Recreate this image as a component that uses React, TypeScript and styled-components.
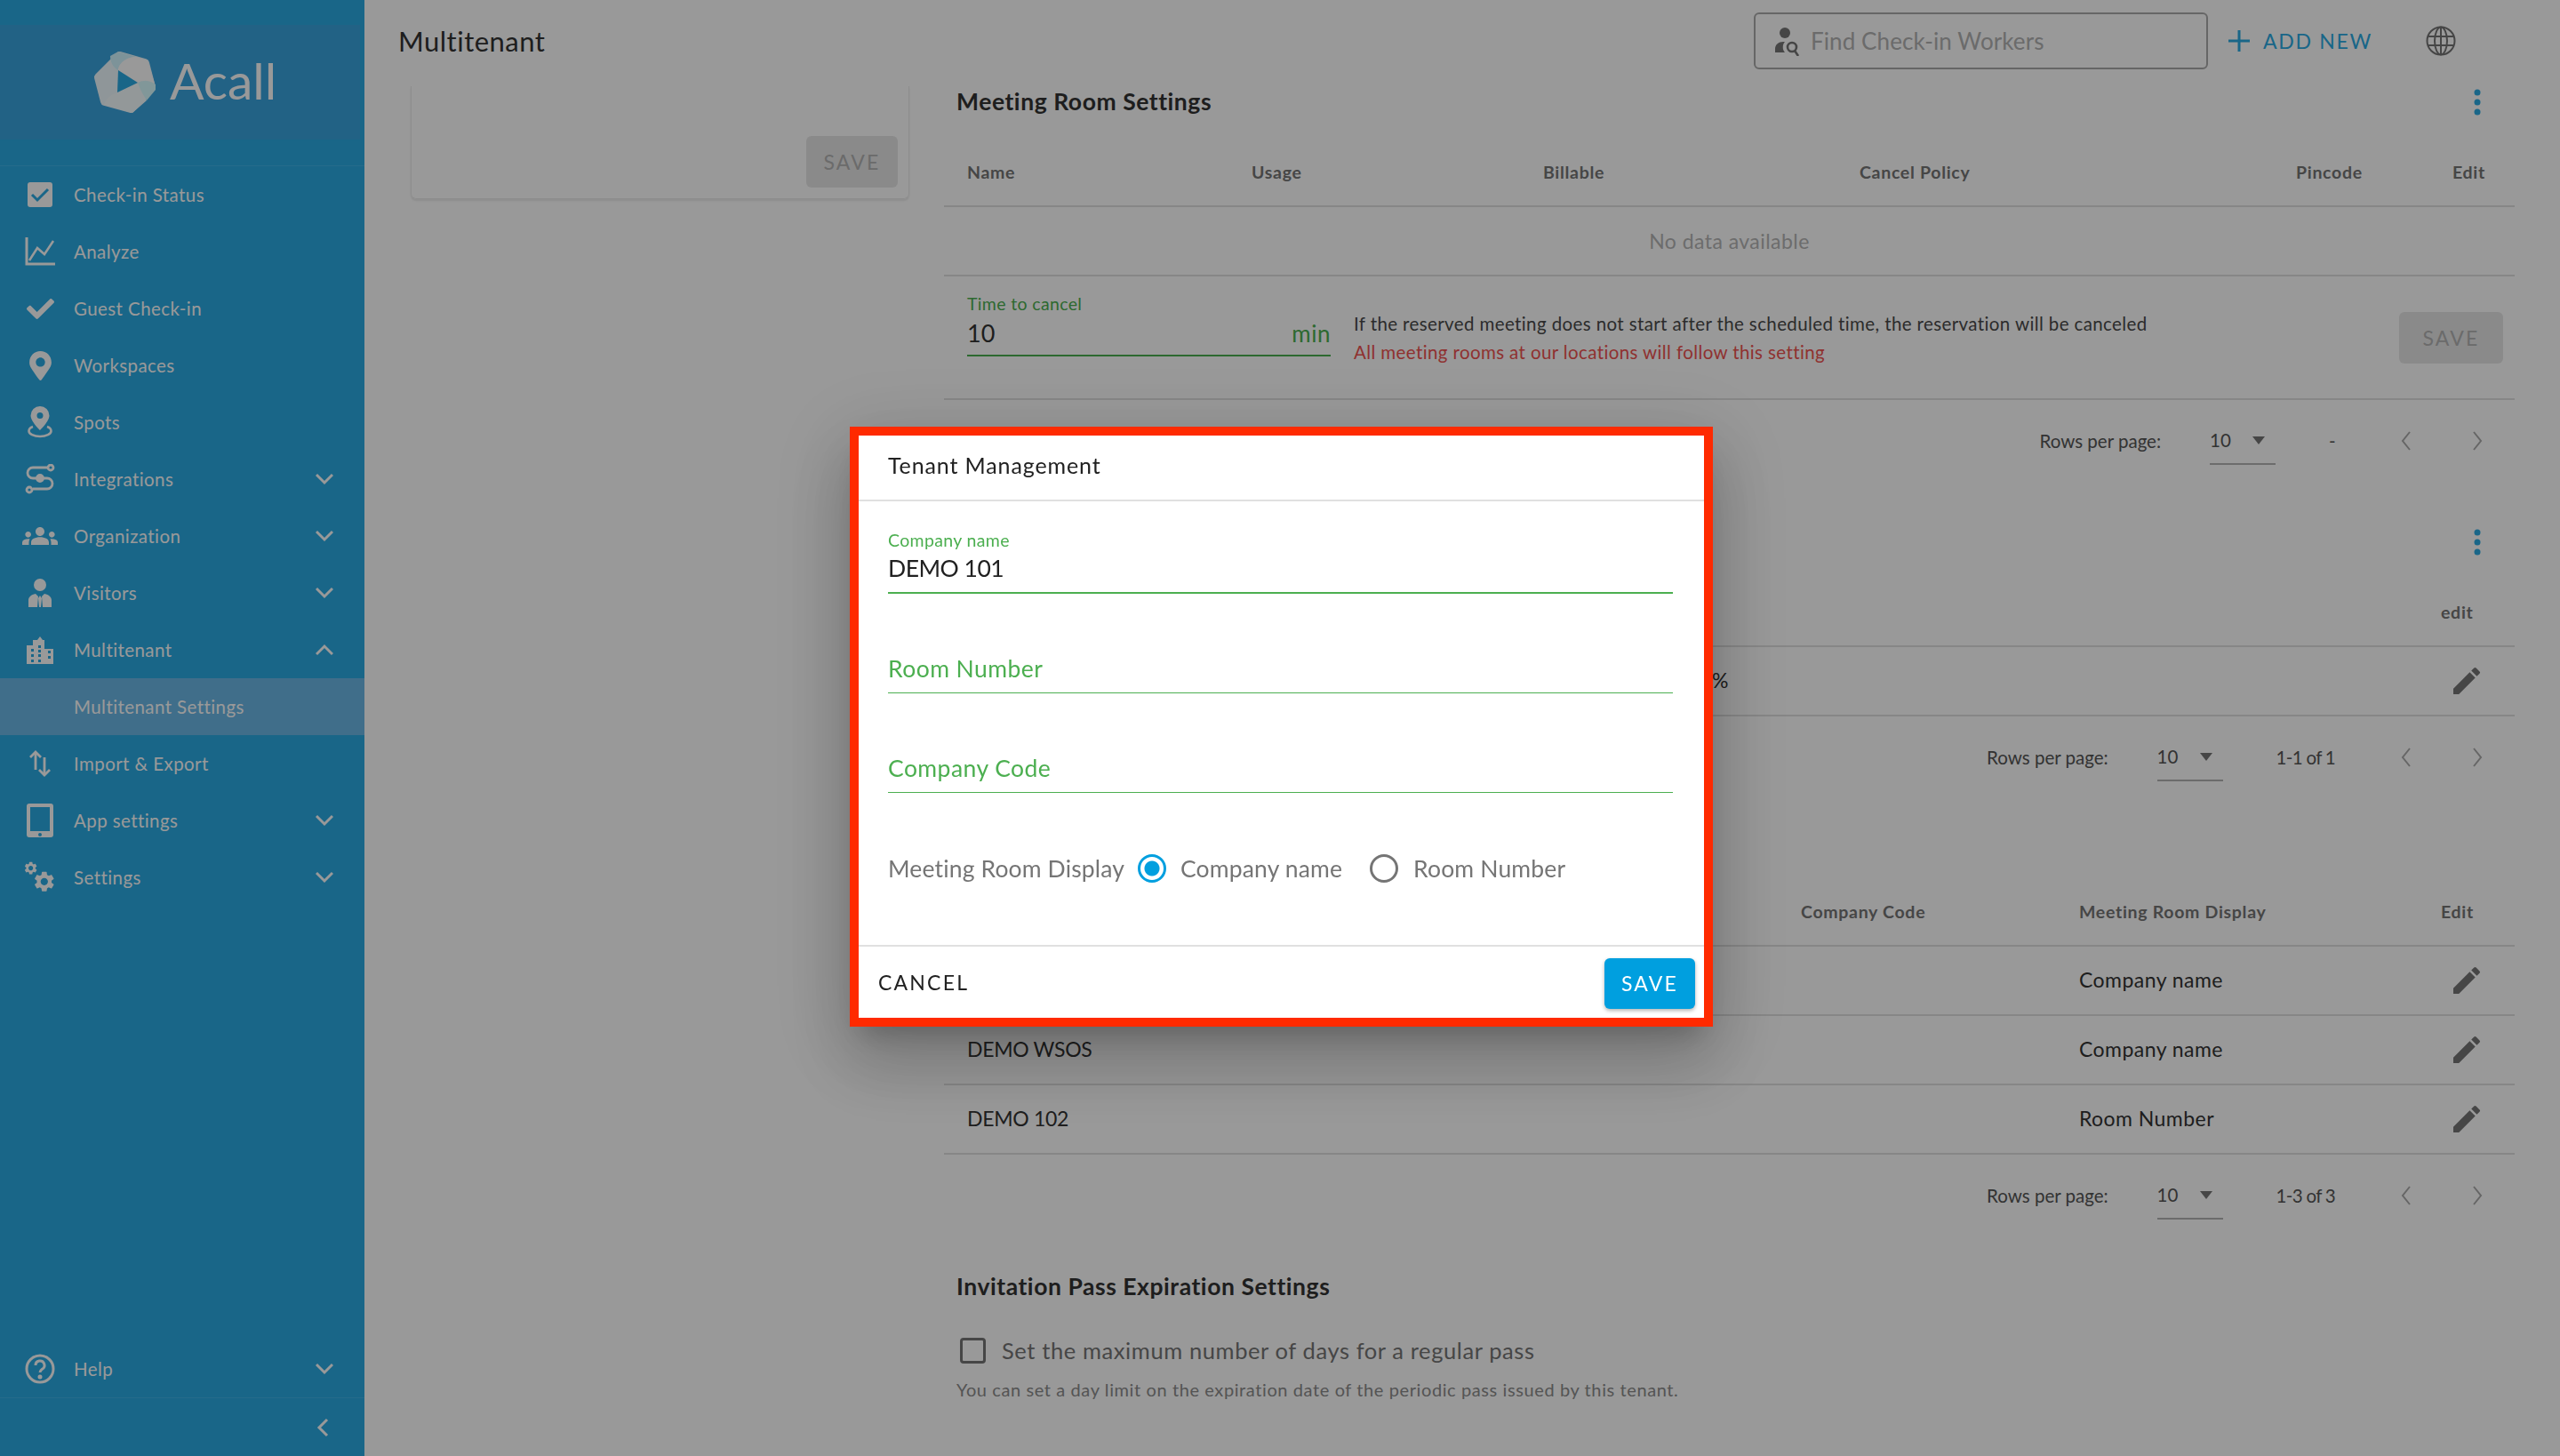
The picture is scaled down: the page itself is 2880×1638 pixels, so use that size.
import React from 'react'
import styled, { createGlobalStyle } from 'styled-components'
import { MdGroups, MdEdit } from 'react-icons/md'
import { FaCheck, FaMapMarkerAlt } from 'react-icons/fa'

const GEAR =
  'M19.14 12.94c.04-.3.06-.61.06-.94 0-.32-.02-.64-.07-.94l2.03-1.58c.18-.14.23-.41.12-.61l-1.92-3.32c-.12-.22-.37-.29-.59-.22l-2.39.96c-.5-.38-1.03-.7-1.62-.94l-.36-2.54c-.04-.24-.24-.41-.48-.41h-3.84c-.24 0-.43.17-.47.41l-.36 2.54c-.59.24-1.13.57-1.62.94l-2.39-.96c-.22-.08-.47 0-.59.22L2.74 8.87c-.12.21-.08.47.12.61l2.03 1.58c-.05.3-.09.63-.09.94s.02.64.07.94l-2.03 1.58c-.18.14-.23.41-.12.61l1.92 3.32c.12.22.37.29.59.22l2.39-.96c.5.38 1.03.7 1.62.94l.36 2.54c.05.24.24.41.48.41h3.84c.24 0 .44-.17.47-.41l.36-2.54c.59-.24 1.13-.56 1.62-.94l2.39.96c.22.08.47 0 .59-.22l1.92-3.32c.12-.22.07-.47-.12-.61l-2.01-1.58zM12 15.6c-1.98 0-3.6-1.62-3.6-3.6s1.62-3.6 3.6-3.6 3.6 1.62 3.6 3.6-1.62 3.6-3.6 3.6z'

const GlobalStyle = createGlobalStyle`
  html, body {
    margin: 0;
    padding: 0;
    height: 100%;
    background: #fff;
    font-family: Lato, "Open Sans", sans-serif;
    color: #333;
  }
  * { box-sizing: border-box; }
`

const Shell = styled.div`
  display: flex;
  width: 2880px;
  height: 1638px;
  overflow: hidden;
`

const Sidebar = styled.aside`
  width: 410px;
  flex: none;
  display: flex;
  flex-direction: column;
  background: #2baae3;
  color: #fff;
`

const LogoBlock = styled.div`
  height: 187px;
  padding: 28px 5px 29px 0;
  border-bottom: 1px solid #3fb4e8;
`

const LogoBand = styled.div`
  height: 129px;
  display: flex;
  align-items: center;
  padding-left: 105px;
  background: #39a3de;
`

const LogoText = styled.span`
  margin: 0 0 5px 15px;
  font-size: 57px;
  font-weight: 400;
  letter-spacing: 0;
  line-height: 1;
`

const Nav = styled.nav`
  flex: 1;
`

const NavRow = styled.div<{ $active?: boolean }>`
  height: 64px;
  display: flex;
  align-items: center;
  background: ${(p) => (p.$active ? '#6bb7e6' : 'transparent')};
`

const NavIcon = styled.span`
  width: 90px;
  flex: none;
  margin-right: -7px;
  display: flex;
  justify-content: center;
  svg { display: block; }
`

const NavLabel = styled.span`
  flex: 1;
  font-size: 20.5px;
  letter-spacing: 0.42px;
`

const NavChevron = styled.svg`
  width: 20px;
  height: 14px;
  margin-right: 35px;
  fill: none;
  stroke: #fff;
  stroke-width: 3;
`

const SidebarFoot = styled.div`
  border-top: 1px solid #3fb4e8;
  height: 66px;
  display: flex;
  align-items: center;
  justify-content: flex-end;
  padding-right: 40px;
`

const Main = styled.main`
  flex: 1;
  min-width: 0;
  display: flex;
  flex-direction: column;
`

const TopBar = styled.header`
  height: 92px;
  flex: none;
  display: flex;
  align-items: center;
  padding-left: 38px;
`

const PageTitle = styled.h1`
  flex: 1;
  margin: 0;
  font-size: 31px;
  font-weight: 400;
  letter-spacing: 0.5px;
  color: #333;
`

const SearchBox = styled.div`
  width: 511px;
  height: 64px;
  display: flex;
  align-items: center;
  padding-left: 20px;
  border: 2px solid #aaa;
  border-radius: 6px;
`

const SearchPlaceholder = styled.span`
  margin-left: 8px;
  font-size: 26px;
  letter-spacing: 0.1px;
  color: #b2b2b2;
`

const AddNew = styled.div`
  display: flex;
  align-items: center;
  margin-left: 22px;
  color: #2baae3;
  font-size: 23px;
  letter-spacing: 1.7px;
`

const AddIcon = styled.svg`
  width: 26px;
  height: 26px;
  margin-right: 14px;
  stroke: #2baae3;
  stroke-width: 3;
`

const GlobeIcon = styled.svg`
  width: 34px;
  height: 34px;
  margin: 0 117px 0 60px;
  fill: none;
  stroke: #757575;
  stroke-width: 2;
`

const Content = styled.div`
  flex: 1;
  display: flex;
  padding: 0 51px 0 52px;
  gap: 39px;
`

const LeftColumn = styled.div`
  width: 561px;
  flex: none;
`

const Card = styled.div`
  height: 127px;
  margin-top: 5px;
  padding: 56px 12px 0 0;
  display: flex;
  justify-content: flex-end;
  border: 1px solid #ececec;
  border-top: none;
  border-radius: 0 0 6px 6px;
  box-shadow: 0 2px 2px rgba(0, 0, 0, 0.08);
`

const RightColumn = styled.div`
  flex: 1;
  min-width: 0;
`

const SectionHead = styled.div<{ $gap?: number }>`
  height: 46px;
  margin-top: ${(p) => p.$gap ?? 0}px;
  padding: 0 36px 0 14px;
  display: flex;
  align-items: center;
  justify-content: space-between;
`

const SectionTitle = styled.h2`
  margin: 0 0 2px;
  font-size: 26.5px;
  font-weight: 700;
  letter-spacing: 0.55px;
  color: #333;
`

const Kebab = styled.svg`
  width: 12px;
  height: 32px;
  fill: #2baae3;
`

const TableRow = styled.div<{ $cols: string; $head?: boolean }>`
  display: grid;
  grid-template-columns: ${(p) => p.$cols};
  align-items: center;
  height: 78px;
  margin-top: ${(p) => (p.$head ? 17 : 0)}px;
  padding: 0 0 ${(p) => (p.$head ? 0 : 2)}px 26px;
  border-bottom: 2px solid #e0e0e0;
  font-size: ${(p) => (p.$head ? 19.5 : 23)}px;
  font-weight: ${(p) => (p.$head ? 700 : 400)};
  letter-spacing: ${(p) => (p.$head ? 0.7 : 0.45)}px;
  color: ${(p) => (p.$head ? '#757575' : '#333')};
`

const NameCell = styled.span`
  letter-spacing: -0.3px;
`

const EmptyRow = styled.div`
  height: 78px;
  display: flex;
  align-items: center;
  justify-content: center;
  border-bottom: 2px solid #e0e0e0;
  font-size: 23px;
  letter-spacing: 0.45px;
  color: #b5b5b5;
`

const EditButton = styled.span`
  display: block;
  padding: 2px 0 0 9px;
  color: #757575;
  svg { display: block; }
`

const TimeRow = styled.div`
  height: 139px;
  display: flex;
  align-items: flex-start;
  padding: 0 13px 0 26px;
  border-bottom: 2px solid #e0e0e0;
`

const TimeField = styled.div`
  width: 409px;
  flex: none;
  padding-top: 19px;
`

const SmallLabel = styled.div`
  height: 24px;
  font-size: 19.5px;
  line-height: 24px;
  letter-spacing: 0.35px;
  color: #4caf50;
`

const TimeInput = styled.div`
  height: 47px;
  display: flex;
  align-items: center;
  justify-content: space-between;
  padding-bottom: 4px;
  border-bottom: 2px solid #4caf50;
  font-size: 27px;
  color: #333;
`

const TimeUnit = styled.span`
  font-size: 26px;
  letter-spacing: 0.5px;
  color: #4caf50;
`

const TimeNote = styled.div`
  margin: 37px 0 0 26px;
  font-size: 20.5px;
  line-height: 32px;
  letter-spacing: 0.39px;
  color: #4a4a4a;
`

const TimeWarn = styled.div`
  color: #ef5350;
`

const DisabledSave = styled.button<{ $w: number }>`
  width: ${(p) => p.$w}px;
  height: 58px;
  flex: none;
  padding: 0;
  border: none;
  border-radius: 6px;
  background: #e6e6e6;
  color: #b2b2b2;
  font-family: inherit;
  font-size: 23px;
  letter-spacing: 2.2px;
`

const TimeSave = styled(DisabledSave)`
  margin: 40px 0 0 auto;
`

const Pagination = styled.div`
  height: 92px;
  display: flex;
  align-items: center;
  justify-content: flex-end;
  padding-right: 2px;
  font-size: 20.5px;
  letter-spacing: 0;
  color: #555;
`

const RowsSelect = styled.div`
  width: 74px;
  height: 54px;
  margin: 0 60px 0 55px;
  display: flex;
  align-items: center;
  justify-content: space-between;
  padding: 0 12px 0 0;
  border-bottom: 2px solid #b5b5b5;
`

const RangeText = styled.span`
  letter-spacing: -0.7px;
`

const Caret = styled.i`
  width: 0;
  height: 0;
  border-left: 7px solid transparent;
  border-right: 7px solid transparent;
  border-top: 9px solid #757575;
`

const PageButton = styled.span`
  width: 80px;
  display: flex;
  justify-content: center;
  svg { display: block; }
`

const PageButtons = styled.div`
  display: flex;
  margin-left: 40px;
`

const CheckRow = styled.div`
  height: 48px;
  margin-top: 24px;
  padding-left: 18px;
  display: flex;
  align-items: center;
  gap: 18px;
  font-size: 25.5px;
  letter-spacing: 0.6px;
  color: #757575;
`

const CheckBox = styled.i`
  width: 29px;
  height: 29px;
  border: 3.5px solid #757575;
  border-radius: 4px;
`

const HelpText = styled.p`
  margin: 8px 0 0 14px;
  font-size: 20px;
  letter-spacing: 0.6px;
  color: #8c8c8c;
`

const Overlay = styled.div`
  position: fixed;
  inset: 0;
  display: flex;
  align-items: center;
  justify-content: center;
  background: rgba(0, 0, 0, 0.4);
`

const Dialog = styled.section`
  width: 971px;
  height: 675px;
  margin: -3px 0 0 3px;
  display: flex;
  flex-direction: column;
  background: #fff;
  border: solid #ff2a00;
  border-width: 10px;
  box-shadow: 0 20px 28px -13px rgba(0, 0, 0, 0.2), 0 44px 70px 6px rgba(0, 0, 0, 0.14),
    0 17px 84px 15px rgba(0, 0, 0, 0.12);
`

const DialogTitle = styled.div`
  height: 74px;
  flex: none;
  padding: 0 0 6px 33px;
  display: flex;
  align-items: center;
  border-bottom: 2px solid #e0e0e0;
  font-size: 25px;
  letter-spacing: 0.88px;
  color: #212121;
`

const DialogBody = styled.div`
  flex: 1;
  padding: 32px 35px 0 33px;
  display: flex;
  flex-direction: column;
`

const Field = styled.div`
  height: 72px;
  margin-bottom: 40px;
`

const FieldValue = styled.div<{ $placeholder?: boolean }>`
  height: 48px;
  display: flex;
  align-items: center;
  padding-bottom: 8px;
  border-bottom: ${(p) => (p.$placeholder ? 1 : 2)}px solid #4caf50;
  font-size: 26.5px;
  letter-spacing: ${(p) => (p.$placeholder ? 0.45 : -0.5)}px;
  color: ${(p) => (p.$placeholder ? '#4caf50' : '#212121')};
`

const EmptyLabel = styled.div`
  height: 24px;
`

const RadioRow = styled.div`
  height: 56px;
  margin-top: 17px;
  display: flex;
  align-items: center;
  font-size: 26.5px;
  letter-spacing: 0.15px;
  color: #757575;
`

const Radio = styled.i<{ $on?: boolean }>`
  width: 32px;
  height: 32px;
  flex: none;
  margin: 0 ${(p) => (p.$on ? 16 : 17)}px 0 ${(p) => (p.$on ? 15 : 31)}px;
  border-radius: 50%;
  border: 3px solid ${(p) => (p.$on ? '#009fdf' : '#757575')};
  background: ${(p) => (p.$on ? 'radial-gradient(circle, #009fdf 0 8px, transparent 9px)' : 'none')};
`

const DialogFooter = styled.div`
  height: 82px;
  flex: none;
  padding: 2px 10px 0 22px;
  display: flex;
  align-items: center;
  justify-content: space-between;
  border-top: 2px solid #e0e0e0;
`

const CancelButton = styled.button`
  margin-bottom: 2px;
  padding: 0;
  border: none;
  background: none;
  font-family: inherit;
  font-size: 23px;
  letter-spacing: 2.2px;
  color: #212121;
`

const SaveButton = styled.button`
  width: 102px;
  height: 57px;
  padding: 0;
  border: none;
  border-radius: 6px;
  background: #009fdf;
  color: #fff;
  font-family: inherit;
  font-size: 23px;
  letter-spacing: 2.2px;
  box-shadow: 0 2px 4px rgba(0, 0, 0, 0.3);
`

const Down = () => (
  <NavChevron viewBox="0 0 20 14">
    <polyline points="1,2 10,11 19,2" />
  </NavChevron>
)

const Up = () => (
  <NavChevron viewBox="0 0 20 14">
    <polyline points="1,12 10,3 19,12" />
  </NavChevron>
)

const navItems: { label: string; icon: React.ReactNode; open?: boolean; active?: boolean; up?: boolean }[] = [
  {
    label: 'Check-in Status',
    icon: (
      <svg width="30" height="30" viewBox="0 0 30 30">
        <path fill="#fff" d="M4 1h22a3 3 0 0 1 3 3v22a3 3 0 0 1-3 3H4a3 3 0 0 1-3-3V4a3 3 0 0 1 3-3z" />
        <polyline points="6,15 12,21 24,9" fill="none" stroke="#2baae3" strokeWidth="3" />
      </svg>
    ),
  },
  {
    label: 'Analyze',
    icon: (
      <svg width="34" height="32" viewBox="0 0 34 32" fill="none" stroke="#fff">
        <polyline points="2,0 2,30 34,30" strokeWidth="3" />
        <polyline points="5,26 14,12 22,19 32,4" strokeWidth="2.5" />
      </svg>
    ),
  },
  { label: 'Guest Check-in', icon: <FaCheck size={31} color="#fff" /> },
  { label: 'Workspaces', icon: <FaMapMarkerAlt size={33} color="#fff" /> },
  {
    label: 'Spots',
    icon: (
      <svg width="28" height="36" viewBox="0 0 28 36">
        <path fill="#fff" fillRule="evenodd" d="M14 0a10.5 10.5 0 0 1 10.5 10.5C24.5 17 14 27 14 27S3.5 17 3.5 10.5A10.5 10.5 0 0 1 14 0zm0 7a3.5 3.5 0 1 0 0 7 3.5 3.5 0 0 0 0-7z" />
        <path fill="none" stroke="#fff" strokeWidth="2.6" d="M6 23c-3 1-4.500 2.500-4.500 5 0 3 5.500 6 12.500 6s12.500-3 12.500-6c0-2.500-1.500-4-4.500-5" />
      </svg>
    ),
  },
  {
    label: 'Integrations',
    open: true,
    icon: (
      <svg width="34" height="34" viewBox="0 0 34 34" fill="none" stroke="#fff" strokeWidth="2.8">
        <path d="M26 4H9a5.500 5.500 0 0 0 0 12h16a5.500 5.500 0 0 1 0 12H9" />
        <circle cx="29" cy="4" r="3" />
        <circle cx="5" cy="29" r="3" />
        <circle cx="17" cy="16" r="3.500" fill="#fff" />
      </svg>
    ),
  },
  { label: 'Organization', open: true, icon: <MdGroups size={40} color="#fff" /> },
  {
    label: 'Visitors',
    open: true,
    icon: (
      <svg width="28" height="32" viewBox="0 0 28 32">
        <circle cx="14" cy="7" r="7" fill="#fff" />
        <path fill="#fff" d="M1 32v-8c0-3 3-6 8-7l3 3-1 12zm26 0v-8c0-3-3-6-8-7l-3 3 1 12zM14 19l2 3-1 10h-2l-1-10z" />
      </svg>
    ),
  },
  {
    label: 'Multitenant',
    up: true,
    icon: (
      <svg width="30" height="32" viewBox="0 0 30 32">
        <path fill="#fff" fillRule="evenodd" d="M0 32V11h7V5h5l3-4 3 4h2v10h10v17zM5 15v3h3v-3zm0 6v3h3v-3zm0 6v3h3v-3zm8-16v3h3v-3zm0 5v3h3v-3zm0 5v3h3v-3zm0 6v3h3v-3zm11-10v3h3v-3zm0 6v3h3v-3z" />
      </svg>
    ),
  },
  { label: 'Multitenant Settings', icon: null, active: true },
  {
    label: 'Import & Export',
    icon: (
      <svg width="24" height="30" viewBox="0 0 24 30" fill="none" stroke="#fff" strokeWidth="2.8">
        <polyline points="1,8 7,2 13,8" />
        <line x1="7" y1="2" x2="7" y2="22" />
        <polyline points="11,22 17,28 23,22" />
        <line x1="17" y1="8" x2="17" y2="28" />
      </svg>
    ),
  },
  {
    label: 'App settings',
    open: true,
    icon: (
      <svg width="32" height="40" viewBox="0 0 32 40">
        <path fill="#fff" fillRule="evenodd" d="M4 1h24a3 3 0 0 1 3 3v32a3 3 0 0 1-3 3H4a3 3 0 0 1-3-3V4a3 3 0 0 1 3-3zm1 4v27h22V5zm11 29a2 2 0 1 0 0 4 2 2 0 0 0 0-4z" />
      </svg>
    ),
  },
  {
    label: 'Settings',
    open: true,
    icon: (
      <svg width="36" height="36" viewBox="0 0 36 36" fill="#fff">
        <path transform="translate(-1 -1) scale(0.72)" d={GEAR} />
        <path transform="translate(9 9) scale(1.15)" d={GEAR} />
      </svg>
    ),
  },
]

const Pencil = () => (
  <EditButton>
    <MdEdit size={40} />
  </EditButton>
)

const PagerChevron = ({ points }: { points: string }) => (
  <svg width="12" height="22" viewBox="0 0 12 22" fill="none" stroke="#aaa" strokeWidth="2">
    <polyline points={points} />
  </svg>
)

const Pager = ({ range }: { range: string }) => (
  <Pagination>
    <span>Rows per page:</span>
    <RowsSelect>
      <span>10</span>
      <Caret />
    </RowsSelect>
    <RangeText>{range}</RangeText>
    <PageButtons>
      <PageButton>
        <PagerChevron points="10,1 2,11 10,21" />
      </PageButton>
      <PageButton>
        <PagerChevron points="2,1 10,11 2,21" />
      </PageButton>
    </PageButtons>
  </Pagination>
)

const KebabMenu = () => (
  <Kebab viewBox="0 0 12 32">
    <circle cx="6" cy="5" r="3.5" />
    <circle cx="6" cy="16" r="3.5" />
    <circle cx="6" cy="27" r="3.5" />
  </Kebab>
)

const roomCols = '320px 328px 356px 491px 176px 1fr'
const usageCols = '838px 820px 1fr'
const tenantCols = '938px 313px 407px 1fr'

export default function App() {
  return (
    <>
      <GlobalStyle />
      <Shell>
        <Sidebar>
          <LogoBlock>
            <LogoBand>
              <svg width="71" height="71" viewBox="0 0 71 71">
                <path
                  d="M30 6 58 14 65 41 42 65 13 57 6 30z"
                  fill="#eefaff"
                  stroke="#eefaff"
                  strokeWidth="10"
                  strokeLinejoin="round"
                />
                <path d="M19 6 28 1 48 7C38 7 30 13 28 22 22 19 19 12 19 6z" fill="#d0f5ff" />
                <path d="M28 22C28 14 38 7 48 7L61 11 69 37C62 33 56 33 50 36z" fill="#fff" />
                <path d="M50 36C56 33 63 33 70 38L70 44 60 56C56 50 52 43 50 36z" fill="#d7fcff" />
                <path d="M27 47 50 36C52 43 56 50 60 56L44 70 12 61C14 54 20 49 27 47z" fill="#f6fdff" />
                <path d="M28 22 50 36 27 47z" fill="#2baae3" />
              </svg>
              <LogoText>Acall</LogoText>
            </LogoBand>
          </LogoBlock>
          <Nav>
            {navItems.map((item) => (
              <NavRow key={item.label} $active={item.active}>
                <NavIcon>{item.icon}</NavIcon>
                <NavLabel>{item.label}</NavLabel>
                {item.open && <Down />}
                {item.up && <Up />}
              </NavRow>
            ))}
          </Nav>
          <NavRow>
            <NavIcon>
              <svg width="34" height="34" viewBox="0 0 34 34" fill="none" stroke="#fff" strokeWidth="3">
                <circle cx="17" cy="17" r="15" />
                <path d="M12 13a5 5 0 1 1 7.500 4.300c-1.500 1-2.500 1.700-2.500 3.700" />
                <circle cx="17" cy="26" r="1" fill="#fff" />
              </svg>
            </NavIcon>
            <NavLabel>Help</NavLabel>
            <Down />
          </NavRow>
          <SidebarFoot>
            <svg width="14" height="22" viewBox="0 0 14 22" fill="none" stroke="#fff" strokeWidth="3">
              <polyline points="12,2 3,11 12,20" />
            </svg>
          </SidebarFoot>
        </Sidebar>
        <Main>
          <TopBar>
            <PageTitle>Multitenant</PageTitle>
            <SearchBox>
              <svg width="34" height="34" viewBox="0 0 34 34" fill="#757575">
                <circle cx="13" cy="8" r="6" />
                <path d="M2 30v-4c0-5 4-8 9-8h2c-3 3-3 9 0 12z" />
                <circle cx="21" cy="24" r="5" fill="none" stroke="#757575" strokeWidth="2.6" />
                <line x1="24" y1="28" x2="28" y2="34" stroke="#757575" strokeWidth="2.6" />
              </svg>
              <SearchPlaceholder>Find Check-in Workers</SearchPlaceholder>
            </SearchBox>
            <AddNew>
              <AddIcon viewBox="0 0 26 26">
                <line x1="13" y1="1" x2="13" y2="25" />
                <line x1="1" y1="13" x2="25" y2="13" />
              </AddIcon>
              ADD NEW
            </AddNew>
            <GlobeIcon viewBox="0 0 34 34">
              <circle cx="17" cy="17" r="15.500" />
              <ellipse cx="17" cy="17" rx="7" ry="15.500" />
              <line x1="17" y1="1" x2="17" y2="33" />
              <line x1="2" y1="12" x2="32" y2="12" />
              <line x1="2" y1="22" x2="32" y2="22" />
            </GlobeIcon>
          </TopBar>
          <Content>
            <LeftColumn>
              <Card>
                <DisabledSave $w={103}>SAVE</DisabledSave>
              </Card>
            </LeftColumn>
            <RightColumn>
              <SectionHead>
                <SectionTitle>Meeting Room Settings</SectionTitle>
                <KebabMenu />
              </SectionHead>
              <TableRow $cols={roomCols} $head>
                <span>Name</span>
                <span>Usage</span>
                <span>Billable</span>
                <span>Cancel Policy</span>
                <span>Pincode</span>
                <span>Edit</span>
              </TableRow>
              <EmptyRow>No data available</EmptyRow>
              <TimeRow>
                <TimeField>
                  <SmallLabel>Time to cancel</SmallLabel>
                  <TimeInput>
                    <span>10</span>
                    <TimeUnit>min</TimeUnit>
                  </TimeInput>
                </TimeField>
                <TimeNote>
                  If the reserved meeting does not start after the scheduled time, the reservation will be canceled
                  <TimeWarn>All meeting rooms at our locations will follow this setting</TimeWarn>
                </TimeNote>
                <TimeSave $w={117}>SAVE</TimeSave>
              </TimeRow>
              <Pager range="-" />

              <SectionHead $gap={45}>
                <span />
                <KebabMenu />
              </SectionHead>
              <TableRow $cols={usageCols} $head>
                <span />
                <span />
                <span>edit</span>
              </TableRow>
              <TableRow $cols={usageCols}>
                <span />
                <span>%</span>
                <Pencil />
              </TableRow>
              <Pager range="1-1 of 1" />

              <SectionHead $gap={26} />
              <TableRow $cols={tenantCols} $head>
                <span>Name</span>
                <span>Company Code</span>
                <span>Meeting Room Display</span>
                <span>Edit</span>
              </TableRow>
              <TableRow $cols={tenantCols}>
                <NameCell>DEMO 101</NameCell>
                <span />
                <span>Company name</span>
                <Pencil />
              </TableRow>
              <TableRow $cols={tenantCols}>
                <NameCell>DEMO WSOS</NameCell>
                <span />
                <span>Company name</span>
                <Pencil />
              </TableRow>
              <TableRow $cols={tenantCols}>
                <NameCell>DEMO 102</NameCell>
                <span />
                <span>Room Number</span>
                <Pencil />
              </TableRow>
              <Pager range="1-3 of 3" />

              <SectionHead $gap={34}>
                <SectionTitle>Invitation Pass Expiration Settings</SectionTitle>
              </SectionHead>
              <CheckRow>
                <CheckBox />
                Set the maximum number of days for a regular pass
              </CheckRow>
              <HelpText>You can set a day limit on the expiration date of the periodic pass issued by this tenant.</HelpText>
            </RightColumn>
          </Content>
        </Main>
      </Shell>
      <Overlay>
        <Dialog>
          <DialogTitle>Tenant Management</DialogTitle>
          <DialogBody>
            <Field>
              <SmallLabel>Company name</SmallLabel>
              <FieldValue>DEMO 101</FieldValue>
            </Field>
            <Field>
              <EmptyLabel />
              <FieldValue $placeholder>Room Number</FieldValue>
            </Field>
            <Field>
              <EmptyLabel />
              <FieldValue $placeholder>Company Code</FieldValue>
            </Field>
            <RadioRow>
              Meeting Room Display
              <Radio $on />
              Company name
              <Radio />
              Room Number
            </RadioRow>
          </DialogBody>
          <DialogFooter>
            <CancelButton>CANCEL</CancelButton>
            <SaveButton>SAVE</SaveButton>
          </DialogFooter>
        </Dialog>
      </Overlay>
    </>
  )
}
